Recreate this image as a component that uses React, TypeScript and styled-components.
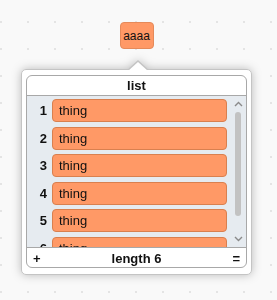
import React from 'react'
import styled, { createGlobalStyle } from 'styled-components'

const GlobalStyle = createGlobalStyle`
  html, body {
    margin: 0;
    padding: 0;
  }
  body {
    width: 277px;
    height: 300px;
    overflow: hidden;
    font-family: 'Liberation Sans', Arial, sans-serif;
    color: #111;
    background-color: #f9f9f9;
    background-image: conic-gradient(from 270deg at 2px 2px, #e4e4e4 25%, transparent 0);
    background-size: 27px 27px;
    background-position: 0 21px;
  }
`

const Stage = styled.div`
  display: flex;
  flex-direction: column;
  align-items: center;
  padding: 22px 4px 0 0;
`

const Reporter = styled.div`
  box-sizing: border-box;
  width: 34px;
  height: 27px;
  display: flex;
  align-items: center;
  justify-content: center;
  background: #ff9966;
  border: 1px solid #e58a5a;
  border-radius: 4px;
  font-size: 12px;
`

const Popup = styled.div`
  position: relative;
  box-sizing: border-box;
  width: 231px;
  height: 206px;
  margin-top: 20px;
  padding: 5px 4px 6px;
  background: #fff;
  border: 1px solid #c4c4c4;
  border-radius: 5px;
  filter: drop-shadow(0 0 5px rgba(0, 0, 0, 0.25));

  &::before {
    content: '';
    position: absolute;
    left: 105px;
    top: -10px;
    width: 0;
    height: 0;
    border-left: 11px solid transparent;
    border-right: 11px solid transparent;
    border-bottom: 10px solid #c4c4c4;
  }
  &::after {
    content: '';
    position: absolute;
    left: 106px;
    top: -8px;
    width: 0;
    height: 0;
    border-left: 10px solid transparent;
    border-right: 10px solid transparent;
    border-bottom: 9px solid #fff;
  }
`

const Panel = styled.div`
  box-sizing: border-box;
  height: 100%;
  display: flex;
  flex-direction: column;
  border: 1px solid #a8a8a8;
  border-radius: 6px;
  overflow: hidden;
  background: #fff;
`

const Header = styled.div`
  height: 19px;
  display: flex;
  align-items: center;
  justify-content: center;
  font-size: 13px;
  font-weight: bold;
  border-bottom: 1px solid #a8a8a8;
`

const Body = styled.div`
  flex: 1;
  display: flex;
  min-height: 0;
  background: #e6ebf0;
  overflow: hidden;
`

const Rows = styled.div`
  flex: 1;
  display: flex;
  flex-direction: column;
  gap: 4.5px;
  padding-top: 3px;
`

const Row = styled.div`
  display: flex;
  align-items: center;
  gap: 5px;
  flex-shrink: 0;
`

const Index = styled.div`
  width: 20px;
  text-align: right;
  font-size: 13px;
  font-weight: bold;
`

const Item = styled.div`
  box-sizing: border-box;
  width: 175px;
  height: 23px;
  display: flex;
  align-items: center;
  padding-left: 6px;
  background: #ff9966;
  border: 1px solid #d9804f;
  border-radius: 4px;
  font-size: 13px;
`

const Scrollbar = styled.div`
  width: 12px;
  margin-right: 2px;
  display: flex;
  flex-direction: column;
  align-items: center;
  padding-top: 5px;
  color: #8a8a8a;
`

const Thumb = styled.div`
  width: 6px;
  height: 104px;
  margin: 5px 0 20px;
  background: #c2c2c2;
  border-radius: 3px;
  flex-shrink: 0;
`

const Footer = styled.div`
  box-sizing: border-box;
  height: 20px;
  display: flex;
  align-items: center;
  justify-content: space-between;
  padding: 2px 6px 0;
  font-size: 13px;
  font-weight: bold;
  border-top: 1px solid #a8a8a8;
`

const Chevron: React.FC<{ up?: boolean }> = ({ up }) => (
  <svg width="9" height="6" viewBox="0 0 9 6" style={{ flexShrink: 0 }}>
    <path
      d={up ? 'M1 5 L4.5 1.5 L8 5' : 'M1 1 L4.5 4.5 L8 1'}
      fill="none"
      stroke="currentColor"
      strokeWidth="1.4"
    />
  </svg>
)

const items = ['thing', 'thing', 'thing', 'thing', 'thing', 'thing']

export default function App() {
  return (
    <>
      <GlobalStyle />
      <Stage>
        <Reporter>aaaa</Reporter>
        <Popup>
          <Panel>
            <Header>list</Header>
            <Body>
              <Rows>
                {items.map((item, index) => (
                  <Row key={index}>
                    <Index>{index + 1}</Index>
                    <Item>{item}</Item>
                  </Row>
                ))}
              </Rows>
              <Scrollbar>
                <Chevron up />
                <Thumb />
                <Chevron />
              </Scrollbar>
            </Body>
            <Footer>
              <span>+</span>
              <span>length 6</span>
              <span>=</span>
            </Footer>
          </Panel>
        </Popup>
      </Stage>
    </>
  )
}
